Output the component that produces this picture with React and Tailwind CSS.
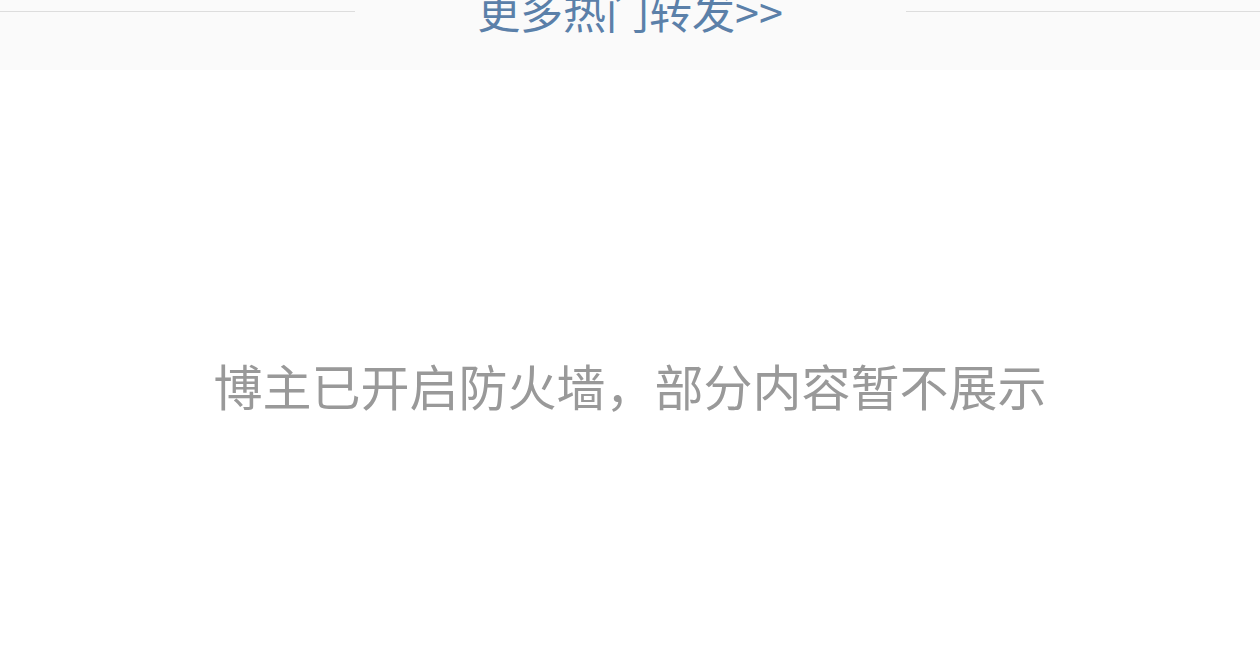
export default function App() {
  const font = { fontFamily: '"Noto Sans CJK SC", "Noto Sans", sans-serif' }
  return (
    <div className="w-[1260px] h-[651px] bg-white overflow-hidden" style={font}>
      <div className="h-[70px] bg-[#fafafa] flex flex-row items-start overflow-hidden">
        <div className="flex-1 mt-[11px] border-t border-[#dddddd]"></div>
        <div className="w-[551px] h-[70px] flex justify-center">
          <span className="text-[43px] leading-none mt-[-11px] text-[#5b80a9] whitespace-nowrap">更多热门转发&gt;&gt;</span>
        </div>
        <div className="flex-1 mt-[11px] border-t border-[#dddddd]"></div>
      </div>
      <div className="flex justify-center pt-[290px]">
        <p className="text-[49px] leading-none text-[#999999] whitespace-nowrap">博主已开启防火墙，部分内容暂不展示</p>
      </div>
    </div>
  )
}
